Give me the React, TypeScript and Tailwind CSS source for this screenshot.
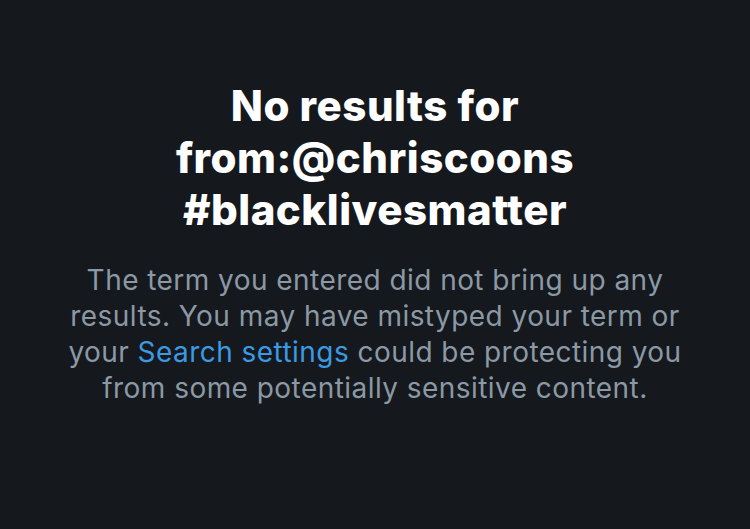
export default function App() {
  return (
    <div
      className="w-[750px] h-[529px] bg-[#15181d] flex flex-col items-center pt-[80px]"
      style={{ fontFamily: "Inter, 'Noto Sans', sans-serif" }}
    >
      <h1 className="text-white font-extrabold text-[42px] leading-[52px] text-center tracking-[0.5px] whitespace-nowrap">
        No results for
        <br />
        from:@chriscoons
        <br />
        #blacklivesmatter
      </h1>
      <p className="mt-[26px] text-[#8b98a5] text-[28px] leading-[36px] text-center tracking-[0.45px] whitespace-nowrap">
        The term you entered did not bring up any
        <br />
        results. You may have mistyped your term or
        <br />
        your <span className="text-[#3b9ae1]">Search settings</span> could be protecting you
        <br />
        from some potentially sensitive content.
      </p>
    </div>
  );
}
